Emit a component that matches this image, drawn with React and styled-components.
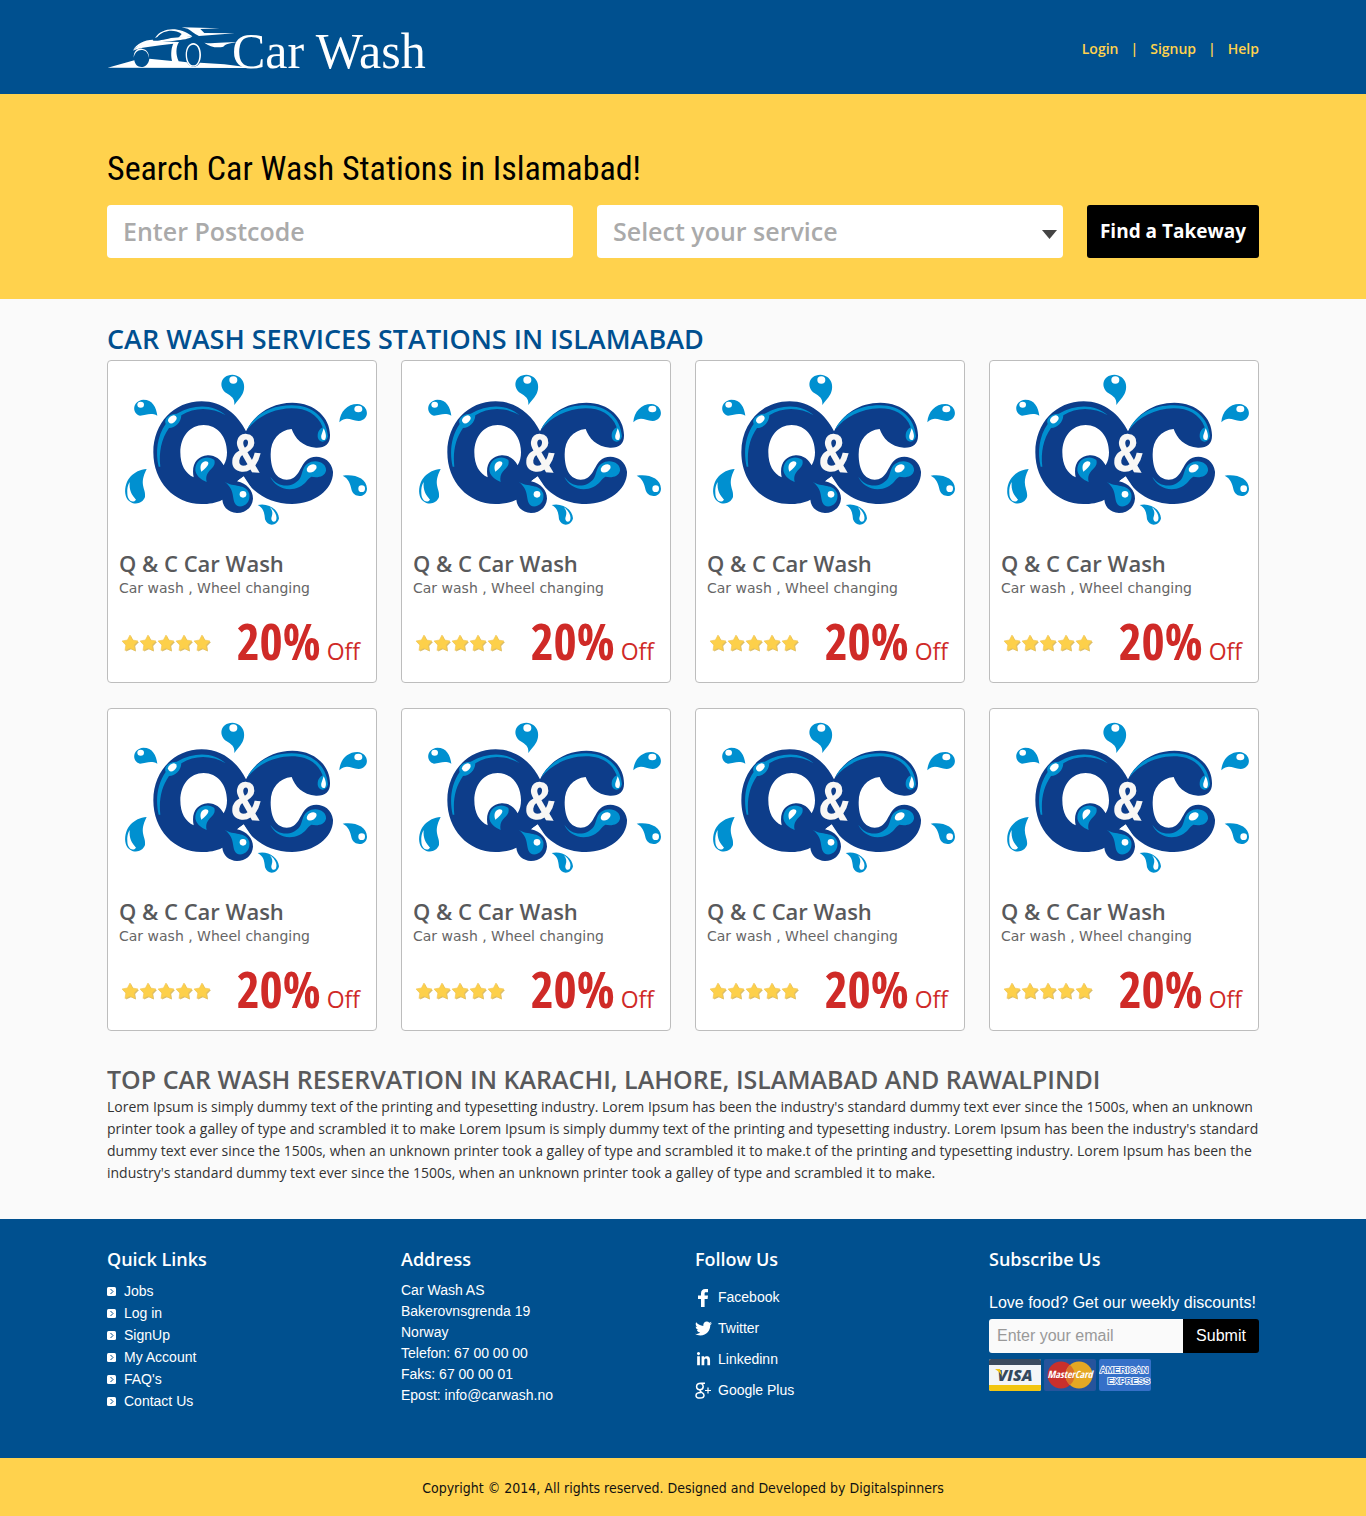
import React from 'react';
import styled, { createGlobalStyle } from 'styled-components';
import { FaTwitter, FaLinkedinIn } from 'react-icons/fa';

const BLUE = '#00508f';
const YELLOW = '#ffd24d';
const sans = "'Open Sans', 'Noto Sans', sans-serif";
const condensed = "'Open Sans Condensed', 'Roboto Condensed', sans-serif";
const arial = "'Liberation Sans', Arial, sans-serif";
const verdana = "'DejaVu Sans', Verdana, sans-serif";

const GlobalStyle = createGlobalStyle`
  *, *::before, *::after { box-sizing: border-box; }
  body { margin: 0; background: #fafafa; font-family: ${sans}; }
  h1, h2, h3, p, ul { margin: 0; padding: 0; }
  ul { list-style: none; }
  a { color: inherit; text-decoration: none; }
  svg { display: block; flex: none; }
`;

const Container = styled.div`
  width: 100%;
  max-width: 1184px;
  margin: 0 auto;
  padding: 0 16px;
`;

const Header = styled.header`
  background: ${BLUE};
`;

const HeaderRow = styled(Container)`
  display: flex;
  align-items: center;
  justify-content: space-between;
  min-height: 94px;
`;

const Brand = styled.a`
  display: flex;
  align-items: center;
  color: #fff;
  font-family: 'Liberation Serif', Georgia, serif;
  font-size: 50px;
  line-height: 56px;
`;

const BrandName = styled.span`
  margin-left: -16px;
  padding-top: 8px;
`;

const Nav = styled.nav`
  display: flex;
  gap: 12px;
  padding-top: 4px;
  color: ${YELLOW};
  font-size: 14px;
  line-height: 20px;
  font-weight: 600;
`;

const Hero = styled.section`
  background: ${YELLOW};
  padding: 46px 0 41px;
`;

const HeroTitle = styled.h1`
  color: #000;
  font-family: 'Roboto Condensed', 'Open Sans Condensed', sans-serif;
  font-weight: 400;
  font-size: 34px;
  line-height: 56px;
  margin-bottom: 9px;
`;

const SearchForm = styled.form`
  display: grid;
  grid-template-columns: 1fr 1fr 172px;
  gap: 24px;
  @media (max-width: 800px) { grid-template-columns: 1fr; }
`;

const fieldStyle = `
  width: 100%;
  height: 53px;
  border: 0;
  border-radius: 4px;
  background: #fff;
  color: #aaa;
  font-family: ${sans};
  font-size: 25px;
  font-weight: 600;
  padding: 0 16px 2px;
`;

const PostcodeInput = styled.input`
  ${fieldStyle}
  &::placeholder { color: #aaa; opacity: 1; }
`;

const SelectWrap = styled.div`
  position: relative;
`;

const ServiceSelect = styled.select`
  ${fieldStyle}
  appearance: none;
`;

const SelectArrow = styled.svg`
  position: absolute;
  right: 6px;
  top: 25px;
  pointer-events: none;
`;

const FindButton = styled.button`
  height: 53px;
  border: 0;
  border-radius: 3px;
  background: #000;
  color: #fff;
  font-family: ${sans};
  font-size: 19px;
  font-weight: 700;
  padding: 0 0 2px;
`;

const Main = styled.main`
  padding: 21px 0 35px;
`;

const StationsTitle = styled.h2`
  color: #004f8f;
  font-size: 27px;
  font-weight: 600;
  line-height: 38px;
  margin-bottom: 2px;
`;

const CardGrid = styled.div`
  display: grid;
  grid-template-columns: repeat(auto-fill, minmax(260px, 1fr));
  gap: 25px 24px;
`;

const Card = styled.article`
  background: #fff;
  border: 1px solid #bdbdbd;
  border-radius: 4px;
  padding: 13px 7px 12px 11px;
`;

const CardLogo = styled.div`
  display: flex;
  justify-content: flex-end;
  margin-bottom: 22px;
`;

const CardName = styled.h3`
  color: #58595b;
  font-size: 22px;
  font-weight: 600;
  line-height: 28px;
  margin-bottom: 2px;
`;

const CardServices = styled.p`
  color: #666;
  font-family: ${verdana};
  font-size: 14px;
  line-height: 18px;
`;

const CardFooter = styled.div`
  display: flex;
  align-items: center;
  justify-content: space-between;
  margin-top: 17px;
  padding-right: 9px;
  height: 56px;
`;

const Discount = styled.p`
  color: #cf2a27;
  font-size: 23px;
  line-height: 56px;
  padding-top: 8px;
`;

const Percent = styled.strong`
  font-family: ${condensed};
  font-size: 50px;
  font-weight: 700;
`;

const AboutTitle = styled.h2`
  color: #58595b;
  font-size: 25px;
  font-weight: 600;
  line-height: 30px;
  margin: 33px 0 2px;
`;

const AboutText = styled.p`
  color: #333;
  font-size: 14px;
  line-height: 22px;
`;

const Footer = styled.footer`
  background: ${BLUE};
  color: #fff;
  padding: 28px 0 46px;
  font-family: ${arial};
  font-size: 14px;
`;

const FooterGrid = styled(Container)`
  display: grid;
  grid-template-columns: repeat(auto-fit, minmax(260px, 1fr));
  gap: 24px;
`;

const FooterTitle = styled.h3`
  font-family: ${sans};
  font-size: 18px;
  font-weight: 600;
  line-height: 24px;
  margin-bottom: 9px;
`;

const QuickLink = styled.li`
  display: flex;
  align-items: center;
  gap: 8px;
  line-height: 22px;
`;

const Address = styled.address`
  font-style: normal;
  line-height: 21px;
`;

const SocialList = styled.ul`
  && { padding-top: 2px; }
`;

const SocialLink = styled.li`
  display: grid;
  grid-template-columns: 16px auto;
  align-items: center;
  justify-content: start;
  justify-items: center;
  gap: 7px;
  line-height: 31px;
`;

const Subscribe = styled.form`
  padding-top: 11px;
  font-size: 16px;
`;

const SubscribeLabel = styled.label`
  display: block;
  line-height: 24px;
  margin-bottom: 4px;
`;

const SubscribeRow = styled.div`
  display: flex;
  height: 34px;
`;

const EmailInput = styled.input`
  flex: 1;
  min-width: 0;
  border: 0;
  border-radius: 3px 0 0 3px;
  background: #fafafa;
  font-family: ${arial};
  font-size: 16px;
  padding: 0 8px;
  &::placeholder { color: #999; opacity: 1; }
`;

const SubmitButton = styled.button`
  width: 76px;
  border: 0;
  border-radius: 0 3px 3px 0;
  background: #000;
  color: #fff;
  font-family: ${arial};
  font-size: 16px;
  padding: 0;
`;

const Payments = styled.div`
  display: flex;
  gap: 3px;
  margin-top: 6px;
`;

const Copyright = styled.div`
  background: ${YELLOW};
  color: #111;
  font-family: 'DejaVu Sans Condensed', 'DejaVu Sans', Verdana, sans-serif;
  font-size: 14px;
  line-height: 22px;
  padding: 19px 16px 17px;
  text-align: center;
`;

const CarLogo = () => (
  <svg width="141" height="44" viewBox="48 45 423 132" fill="#fff" aria-hidden="true">
    <path d="M50 173 L130 151 C132 164 140 171 151 171 C164 171 173 161 175 146 L243 153 C238 131 242 110 247 101 L208 106 C180 110 150 112 126 122 C140 106 160 97 184 94 L264 96 C254 112 254 134 263 154 L288 157 C293 166 299 170 306 170 C316 170 323 165 327 158 L400 163 L470 172 L470 174 Z" />
    <path d="M128 143 C128 123 140 114 153 116 C168 118 175 130 174 144 C171 127 163 120 151 120 C139 120 131 129 128 143 Z" />
    <path fillRule="evenodd" d="M307 99 C320 99 330 114 330 134 C330 156 319 170 307 170 C294 170 284 156 284 134 C284 114 294 99 307 99 Z M307 104 C296 104 288 116 288 134 C288 153 297 166 307 166 C318 166 325 153 325 134 C325 116 318 104 307 104 Z" />
    <path d="M126 121 C136 101 160 90 186 89 C181 95 205 93 240 84 L304 79 C296 87 275 90 250 92 C220 95 180 98 160 102 C145 106 135 111 126 121 Z" />
    <path d="M192 84 C214 50 266 50 304 79 L262 84 L272 72 C250 56 216 60 199 81 Z" />
    <path d="M272 52 L386 55 L328 57 L340 69 L431 70 L324 78 C310 72 299 60 290 56 Z" />
    <path d="M340 98 C365 104 395 94 440 98 C412 98 402 103 397 110 C380 115 356 111 340 98 Z" />
  </svg>
);

const StationLogo = () => (
  <svg width="245" height="153" viewBox="72 57 735 459" role="img" aria-label="Q &amp; C">
    <g fill="#0d3d8a">
      <path fillRule="evenodd" d="M305 139 C366 139 413 178 438 229 C464 176 515 143 577 143 C646 143 691 190 690 242 C690 266 675 279 648 278 C608 276 584 249 575 222 C537 226 512 254 512 298 C512 346 530 374 560 374 C595 374 598 338 618 317 C640 295 693 303 699 350 C701 403 643 447 576 447 C510 447 456 413 431 365 L411 379 C441 385 459 407 459 431 C457 457 437 474 411 474 C387 472 369 458 367 434 C349 444 327 447 304 447 C222 447 160 380 160 292 C160 204 222 139 305 139 Z M311 210 C270 210 241 245 241 292 C241 330 256 356 281 367 C273 329 291 303 323 301 C345 300 361 313 371 331 C378 320 381 306 381 292 C381 245 352 210 311 210 Z" />
    </g>
    <g fill="#0090d0">
      <path d="M176 335 C166 292 171 244 197 207 C190 190 209 176 230 176 C284 146 341 148 377 181 C336 157 285 155 244 181 C243 203 226 219 207 219 C184 252 176 291 181 335 Z" />
      <path d="M441 224 C466 176 513 151 575 151 C640 151 679 190 684 244 C679 267 654 264 653 244 C653 228 660 222 668 217 C653 177 618 160 575 160 C517 161 471 187 441 224 Z" />
      <path d="M511 365 C534 398 575 401 599 371 C608 357 606 337 622 326 C646 309 681 323 678 347 C674 365 654 369 634 365 C622 371 618 386 598 396 C559 414 522 392 511 365 Z" />
      <path d="M320 381 C304 375 284 361 286 340 C289 308 325 299 343 315 C351 343 312 343 320 381 Z" />
      <path d="M374 380 C400 398 438 384 448 416 C452 441 434 457 415 454 C389 440 412 409 374 380 Z" />
      <path d="M403 150 C405 129 393 124 380 115 C354 97 361 60 397 59 C431 61 440 94 427 118 C420 131 411 139 403 150 Z" />
      <path d="M172 182 C151 172 139 181 120 182 C95 176 96 137 130 134 C158 134 169 157 172 182 Z" />
      <path d="M718 202 C720 170 742 147 772 147 C807 149 812 194 776 198 C751 196 740 182 718 202 Z" />
      <path d="M140 342 C101 345 72 375 76 416 C80 450 124 456 135 426 C139 400 115 391 140 342 Z" />
      <path d="M728 362 C763 356 800 369 801 401 C800 428 763 431 755 406 C751 386 746 371 728 362 Z" />
      <path d="M473 450 C501 442 535 461 537 490 C532 514 502 516 495 493 C493 469 489 459 473 450 Z" />
    </g>
    <g fill="#fff">
      <ellipse cx="217" cy="193" rx="14" ry="10" transform="rotate(-40 217 193)" />
      <path d="M671 220 C677 232 681 246 675 254 C666 259 661 248 665 238 Z" />
      <ellipse cx="635" cy="340" rx="16" ry="11" transform="rotate(-32 635 340)" />
      <path d="M304 350 C298 335 303 321 316 319 C331 319 328 333 304 350 Z" />
      <circle cx="429" cy="418" r="10" />
      <path d="M413 377 L431 364 L454 398 C443 386 431 380 413 377 Z" />
      <ellipse cx="400" cy="75" rx="12" ry="11" />
      <ellipse cx="122" cy="149" rx="10" ry="9" />
      <ellipse cx="775" cy="162" rx="12" ry="10" />
      <path d="M89 381 C87 407 95 419 108 434 C99 447 82 437 82 415 C81 402 83 390 89 381 Z" />
      <circle cx="785" cy="401" r="10" />
      <path d="M510 457 C526 468 534 486 527 498 C519 504 511 496 515 485 C519 473 517 467 510 457 Z" />
    </g>
    <text x="440" y="350" textAnchor="middle" fontFamily="Open Sans Condensed, sans-serif" fontWeight="700" fontSize="156" fill="#f8f7f5" transform="rotate(5 440 295)">&amp;</text>
  </svg>
);

const Stars = () => (
  <svg width="92" height="20" viewBox="0 0 92 20" role="img" aria-label="5 of 5 stars">
    {[11, 29, 47, 65, 83].map((x) => (
      <g key={x} transform={`translate(${x} 11)`}>
        <path transform="translate(1 1)" fill="#d9bd6a" d="M0 -8 L2.600 -3 L8 -2 L4.200 2 L5 7.500 L0 5.200 L-5 7.500 L-4.200 2 L-8 -2 L-2.600 -3 Z" />
        <path fill="#fdd04a" stroke="#f0c455" strokeWidth="0.6" strokeLinejoin="round" d="M0 -8 L2.600 -3 L8 -2 L4.200 2 L5 7.500 L0 5.200 L-5 7.500 L-4.200 2 L-8 -2 L-2.600 -3 Z" />
      </g>
    ))}
  </svg>
);

const Bullet = () => (
  <svg width="9" height="9" viewBox="0 0 9 9" aria-hidden="true">
    <rect width="9" height="9" rx="1.500" fill="#fff" />
    <path d="M3.500 2 L6 4.500 L3.500 7" fill="none" stroke={BLUE} strokeWidth="1" />
  </svg>
);

const FacebookIcon = () => (
  <svg width="10" height="18" viewBox="0 0 10 18" fill="#fff" aria-hidden="true">
    <path d="M3 18 V10 H0 V6.500 H3 V4.500 C3 1.500 4.600 0 7.200 0 H10 V3.200 H8 C7 3.200 6.600 3.600 6.600 4.600 V6.500 H10 L9.600 10 H6.600 V18 Z" />
  </svg>
);

const GooglePlusIcon = () => (
  <svg width="16" height="17" viewBox="0 0 16 17" fill="none" stroke="#fff" aria-hidden="true">
    <path strokeWidth="1.500" d="M10 1.200 H6 C3 1.200 1.600 3 1.600 4.600 C1.600 6.600 3 7.800 5 7.800 C7 7.800 8.200 6.500 8.200 4.600 C8.200 3 7.400 1.800 6 1.200" />
    <path strokeWidth="1.500" d="M5.400 7.800 C4.400 9.200 5.600 9.600 7 10.600 C8.200 11.400 9 12 9 13.200 C9 15 7.400 16 5 16 C2.600 16 1 15 1 13.400 C1 11.600 3 10.400 6 10.400" />
    <path strokeWidth="1.200" d="M13 5.500 V11.500 M10 8.500 H16" />
  </svg>
);

const VisaCard = () => (
  <svg width="52" height="32" viewBox="0 0 52 32" role="img" aria-label="Visa">
    <rect width="52" height="32" rx="2" fill="#f3f5f7" />
    <path d="M0 6 V2 Q0 0 2 0 H50 Q52 0 52 2 V6 Z" fill="#3b4a5e" />
    <path d="M0 26 V30 Q0 32 2 32 H50 Q52 32 52 30 V26 Z" fill="#f2c511" />
    <text x="26" y="22" textAnchor="middle" fontFamily="Open Sans, sans-serif" fontStyle="italic" fontWeight="800" fontSize="16" fill="#34495e">VISA</text>
    <path d="M6 10 H11 L13 17 Q10 12 6 10 Z" fill="#f2c511" />
  </svg>
);

const MasterCard = () => (
  <svg width="52" height="32" viewBox="0 0 52 32" role="img" aria-label="MasterCard">
    <rect width="52" height="32" rx="2" fill="#26549c" />
    <circle cx="17" cy="16" r="13.500" fill="#c9302c" />
    <circle cx="35" cy="16" r="13.500" fill="#e5a823" />
    <path d="M26 6 Q21.500 10 21.500 16 Q21.500 22 26 26 Q30.500 22 30.500 16 Q30.500 10 26 6 Z" fill="#d9702a" />
    <text x="26" y="19" textAnchor="middle" fontFamily="Open Sans Condensed, sans-serif" fontStyle="italic" fontWeight="700" fontSize="10" fill="#fff">MasterCard</text>
  </svg>
);

const AmexCard = () => (
  <svg width="52" height="32" viewBox="0 0 52 32" role="img" aria-label="American Express">
    <rect width="52" height="32" rx="2" fill="#3570c8" />
    <g fontFamily="Liberation Sans, sans-serif" fontWeight="700" fontSize="9" fill="#3570c8" stroke="#fff" strokeWidth="1.600" paintOrder="stroke">
      <text x="25" y="14" textAnchor="middle">AMERICAN</text>
      <text x="51" y="25" textAnchor="end">EXPRESS</text>
    </g>
  </svg>
);

const stations = Array.from({ length: 8 }, (_, id) => ({
  id,
  name: 'Q & C Car Wash',
  services: 'Car wash , Wheel changing',
  discount: '20%',
}));

const quickLinks = ['Jobs', 'Log in', 'SignUp', 'My Account', "FAQ's", 'Contact Us'];

const socialLinks = [
  { name: 'Facebook', icon: <FacebookIcon /> },
  { name: 'Twitter', icon: <FaTwitter size={17} /> },
  { name: 'Linkedinn', icon: <FaLinkedinIn size={15} /> },
  { name: 'Google Plus', icon: <GooglePlusIcon /> },
];

const StationCard = ({ station }) => (
  <Card>
    <CardLogo><StationLogo /></CardLogo>
    <CardName>{station.name}</CardName>
    <CardServices>{station.services}</CardServices>
    <CardFooter>
      <Stars />
      <Discount><Percent>{station.discount}</Percent> Off</Discount>
    </CardFooter>
  </Card>
);

export default function App() {
  return (
    <>
      <GlobalStyle />
      <Header>
        <HeaderRow>
          <Brand href="#"><CarLogo /><BrandName>Car Wash</BrandName></Brand>
          <Nav>
            <a href="#login">Login</a><span>|</span>
            <a href="#signup">Signup</a><span>|</span>
            <a href="#help">Help</a>
          </Nav>
        </HeaderRow>
      </Header>
      <Hero>
        <Container>
          <HeroTitle>Search Car Wash Stations in Islamabad!</HeroTitle>
          <SearchForm>
            <PostcodeInput type="text" aria-label="Postcode" placeholder="Enter Postcode" />
            <SelectWrap>
              <ServiceSelect aria-label="Service">
                <option>Select your service</option>
              </ServiceSelect>
              <SelectArrow width="15" height="9" viewBox="0 0 15 9" aria-hidden="true">
                <path d="M0 0 H15 L7.500 9 Z" fill="#444" />
              </SelectArrow>
            </SelectWrap>
            <FindButton type="button">Find a Takeway</FindButton>
          </SearchForm>
        </Container>
      </Hero>
      <Main>
        <Container>
          <StationsTitle>CAR WASH SERVICES STATIONS IN ISLAMABAD</StationsTitle>
          <CardGrid>
            {stations.map((station) => <StationCard key={station.id} station={station} />)}
          </CardGrid>
          <AboutTitle>TOP CAR WASH RESERVATION IN KARACHI, LAHORE, ISLAMABAD AND RAWALPINDI</AboutTitle>
          <AboutText>
            Lorem Ipsum is simply dummy text of the printing and typesetting industry. Lorem Ipsum has been the industry's standard dummy text ever since the 1500s, when an unknown printer took a galley of type and scrambled it to make Lorem Ipsum is simply dummy text of the printing and typesetting industry. Lorem Ipsum has been the industry's standard dummy text ever since the 1500s, when an unknown printer took a galley of type and scrambled it to make.t of the printing and typesetting industry. Lorem Ipsum has been the industry's standard dummy text ever since the 1500s, when an unknown printer took a galley of type and scrambled it to make.
          </AboutText>
        </Container>
      </Main>
      <Footer>
        <FooterGrid>
          <section>
            <FooterTitle>Quick Links</FooterTitle>
            <ul>
              {quickLinks.map((name) => (
                <QuickLink key={name}><Bullet /><a href="#">{name}</a></QuickLink>
              ))}
            </ul>
          </section>
          <section>
            <FooterTitle>Address</FooterTitle>
            <Address>
              Car Wash AS<br />Bakerovnsgrenda 19<br />Norway<br />
              Telefon: 67 00 00 00<br />Faks: 67 00 00 01<br />Epost: info@carwash.no
            </Address>
          </section>
          <section>
            <FooterTitle>Follow Us</FooterTitle>
            <SocialList>
              {socialLinks.map(({ name, icon }) => (
                <SocialLink key={name}>{icon}<a href="#">{name}</a></SocialLink>
              ))}
            </SocialList>
          </section>
          <section>
            <FooterTitle>Subscribe Us</FooterTitle>
            <Subscribe>
              <SubscribeLabel htmlFor="email">Love food? Get our weekly discounts!</SubscribeLabel>
              <SubscribeRow>
                <EmailInput id="email" type="email" placeholder="Enter your email" />
                <SubmitButton type="button">Submit</SubmitButton>
              </SubscribeRow>
              <Payments><VisaCard /><MasterCard /><AmexCard /></Payments>
            </Subscribe>
          </section>
        </FooterGrid>
      </Footer>
      <Copyright>Copyright © 2014, All rights reserved. Designed and Developed by Digitalspinners</Copyright>
    </>
  );
}
